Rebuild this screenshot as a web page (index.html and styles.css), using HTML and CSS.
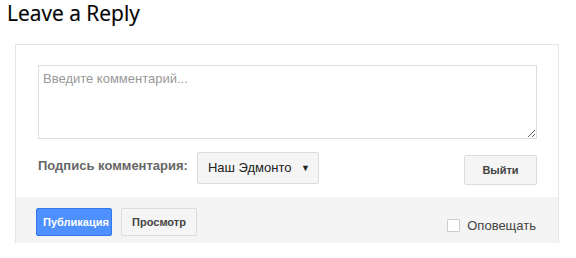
FILE: index.html
```html
<!DOCTYPE html>
<html lang="ru">
<head>
  <meta charset="UTF-8">
  <meta name="viewport" content="width=device-width, initial-scale=1.0">
  <title>Leave a Reply</title>
  <link rel="stylesheet" href="styles.css">
</head>
<body>
  <h3 class="reply-title">Leave a Reply</h3>

  <form class="comment-box" onsubmit="return false;">
    <div class="comment-main">
      <textarea class="comment-text" placeholder="Введите комментарий..."></textarea>

      <div class="sign-row">
        <label class="sign-label">Подпись комментария:</label>
        <div class="sign-select">
          <span>Наш Эдмонто</span>
          <span class="arrow">&#9660;</span>
        </div>
        <button type="button" class="btn logout">Выйти</button>
      </div>
    </div>

    <div class="comment-footer">
      <button type="button" class="btn publish">Публикация</button>
      <button type="button" class="btn preview">Просмотр</button>
      <label class="notify">
        <input type="checkbox" class="notify-box">
        Оповещать
      </label>
    </div>
  </form>
</body>
</html>
```

FILE: styles.css
```css
body {
  font-family: "Liberation Sans", Arial, sans-serif;
  margin: 0;
  padding: 0;
  background-color: #ffffff;
}

.reply-title {
  font-family: "Open Sans", sans-serif;
  font-size: 21px;
  font-weight: normal;
  line-height: 24px;
  margin: 0;
  padding: 1px 0 0 7px;
  height: 24px;
  color: #000;
  -webkit-text-stroke: 0.2px #000;
}

.comment-box {
  margin: 19px 17px 0 15px;
  border: 1px solid #e5e5e5;
  border-bottom: none;
}

.comment-main {
  padding: 20px 21px 12px 22px;
}

.comment-text {
  display: block;
  width: 100%;
  height: 74px;
  box-sizing: border-box;
  border: 1px solid #dddddd;
  padding: 5px 4px;
  font-family: "Liberation Sans", Arial, sans-serif;
  font-size: 13px;
  line-height: 15px;
  margin: 0;
}

.comment-text::placeholder {
  color: #999999;
}

.sign-row {
  display: flex;
  align-items: flex-start;
  margin-top: 13px;
}

.sign-label {
  font-size: 13px;
  font-weight: bold;
  line-height: 16px;
  color: #666666;
  margin-top: 6px;
  margin-right: 9px;
}

.sign-select {
  display: flex;
  justify-content: space-between;
  width: 122px;
  height: 32px;
  box-sizing: border-box;
  border: 1px solid #dcdcdc;
  border-radius: 2px;
  background-color: #f5f5f5;
  padding: 0 8px 0 10px;
  font-size: 13px;
  line-height: 30px;
  color: #222;
}

.sign-select .arrow {
  font-size: 9px;
}

.btn {
  font-family: "Liberation Sans", Arial, sans-serif;
  font-size: 11px;
  font-weight: bold;
  height: 28px;
  width: 76px;
  box-sizing: border-box;
  border: 1px solid #dcdcdc;
  border-radius: 2px;
  background-color: #f5f5f5;
  color: #444444;
  padding: 0;
  cursor: pointer;
}

.logout {
  margin-left: auto;
  margin-top: 3px;
  width: 73px;
  height: 30px;
}

.comment-footer {
  display: flex;
  align-items: flex-start;
  height: 46px;
  box-sizing: border-box;
  padding: 11px 22px 0 20px;
  background-color: #f4f4f4;
}

.publish {
  background-color: #4d90fe;
  border-color: #3079ed;
  color: #ffffff;
  text-align: left;
  padding-left: 6px;
  white-space: nowrap;
  overflow: hidden;
}

.preview {
  margin-left: 9px;
}

.notify {
  display: flex;
  align-items: center;
  margin-left: auto;
  margin-top: 10px;
  font-size: 13px;
  line-height: 15px;
  color: #444444;
}

.notify-box {
  appearance: none;
  width: 13px;
  height: 13px;
  margin: 0 7px 0 0;
  border: 1px solid #cccccc;
  border-radius: 1px;
  background-color: #ffffff;
}
```
